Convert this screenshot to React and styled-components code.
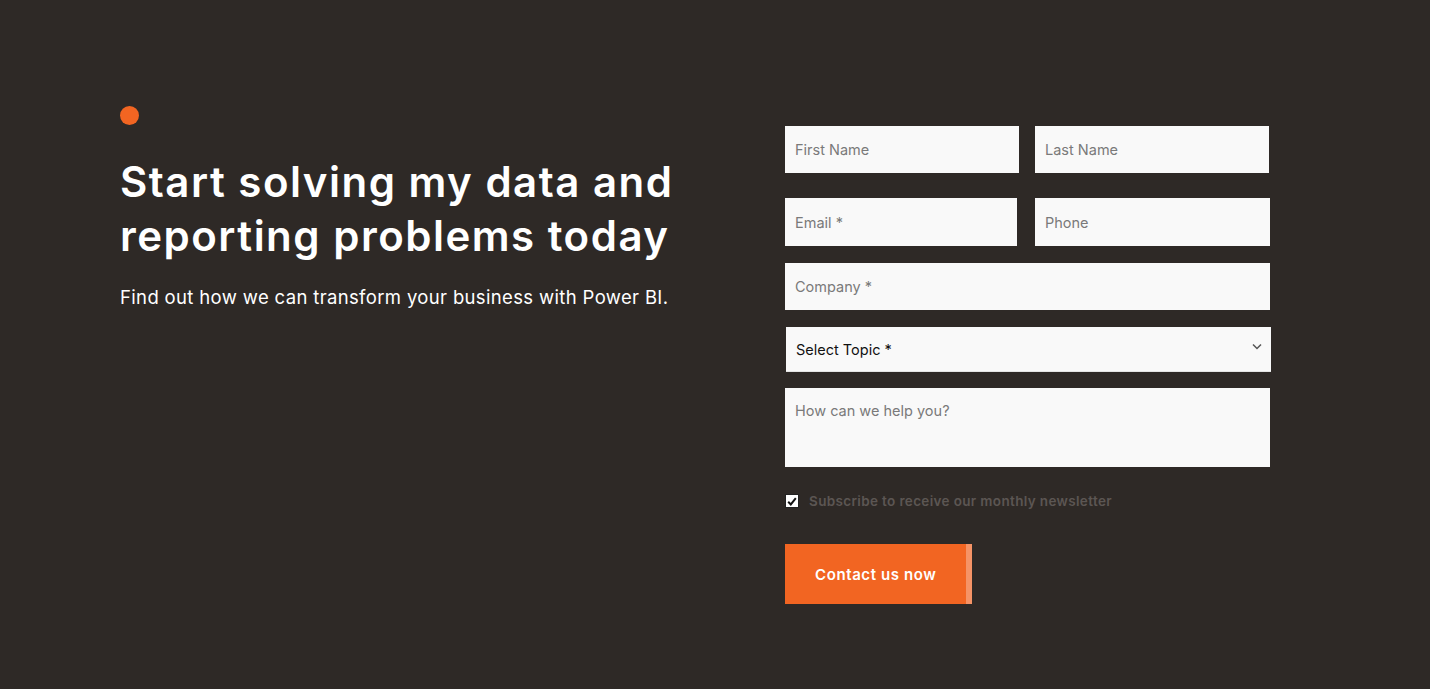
import React from "react";
import styled, { createGlobalStyle } from "styled-components";

const GlobalStyle = createGlobalStyle`
  html, body {
    margin: 0;
    padding: 0;
    background: #2e2926;
  }
  body {
    font-family: "Inter", "Noto Sans", sans-serif;
  }
  * {
    box-sizing: border-box;
  }
`;

const Page = styled.div`
  width: 1430px;
  height: 689px;
  background: #2e2926;
  display: grid;
  grid-template-columns: 665px 485px;
  align-items: start;
  padding: 106px 0 0 120px;
`;

const Intro = styled.div`
  display: flex;
  flex-direction: column;
`;

const Dot = styled.span`
  display: block;
  width: 19px;
  height: 19px;
  border-radius: 50%;
  background: #f26522;
`;

const Heading = styled.h1`
  margin: 30px 0 0;
  color: #fff;
  font-size: 42px;
  font-weight: 600;
  line-height: 54px;
  letter-spacing: 1.5px;
  white-space: nowrap;
`;

const Lead = styled.p`
  margin: 21px 0 0;
  color: #fff;
  font-size: 18.5px;
  font-weight: 400;
  line-height: 26px;
  letter-spacing: 0.35px;
`;

const Form = styled.form`
  display: flex;
  flex-direction: column;
  padding-top: 20px;
`;

const Row = styled.div`
  display: grid;
  grid-template-columns: ${(p) => p.$cols || "234px 234px"};
  column-gap: ${(p) => p.$colGap || 16}px;
  margin-bottom: ${(p) => p.$gap}px;
`;

const Field = styled.input`
  width: 100%;
  height: ${(p) => p.$h || 47}px;
  margin: 0 0 ${(p) => p.$gap || 0}px;
  border: none;
  background: #f9f9f9;
  padding: 0 10px;
  font-family: inherit;
  font-size: 14.5px;
  color: #333;
  outline: none;
  &::placeholder {
    color: #7a7a7a;
  }
`;

const SelectWrap = styled.div`
  position: relative;
  height: 45px;
  margin: 0 -1px 16px 1px;
  background: #f9f9f9;
  border-bottom: 1px solid #e4e4e4;
  display: flex;
  align-items: center;
  padding: 0 10px;
  font-size: 14.5px;
  color: #111;
`;

const Chevron = styled.svg`
  position: absolute;
  right: 9px;
  top: 16px;
`;

const Message = styled.textarea`
  width: 100%;
  height: 79px;
  border: none;
  background: #f9f9f9;
  padding: 14px 10px;
  font-family: inherit;
  font-size: 14.5px;
  resize: none;
  outline: none;
  &::placeholder {
    color: #7a7a7a;
  }
`;

const CheckRow = styled.label`
  display: flex;
  align-items: center;
  gap: 10px;
  margin-top: 26px;
  color: #5c5653;
  font-size: 13.5px;
  font-weight: 600;
  letter-spacing: 0.35px;
`;

const Box = styled.span`
  width: 14px;
  height: 14px;
  background: #fff;
  border: 1px solid #222;
  display: flex;
  align-items: center;
  justify-content: center;
`;

const Button = styled.button`
  align-self: flex-start;
  margin-top: 35px;
  width: 187px;
  height: 60px;
  border: none;
  background: #f26522;
  box-shadow: inset -6px 0 0 #f59366;
  color: #fff;
  font-family: inherit;
  font-size: 15px;
  font-weight: 600;
  letter-spacing: 0.6px;
  padding: 0 0 0 30px;
  text-align: left;
  cursor: pointer;
`;

export default function App() {
  return (
    <>
      <GlobalStyle />
      <Page>
        <Intro>
          <Dot />
          <Heading>
            Start solving my data and
            <br />
            reporting problems today
          </Heading>
          <Lead>Find out how we can transform your business with Power BI.</Lead>
        </Intro>
        <Form onSubmit={(e) => e.preventDefault()}>
          <Row $gap={25}>
            <Field placeholder="First Name" />
            <Field placeholder="Last Name" />
          </Row>
          <Row $gap={17} $cols="232px 235px" $colGap={18}>
            <Field $h={48} placeholder="Email *" />
            <Field $h={48} placeholder="Phone" />
          </Row>
          <Field $gap={17} placeholder="Company *" />
          <SelectWrap>
            Select Topic *
            <Chevron width="10" height="7" viewBox="0 0 10 7">
              <path d="M1 1.5 L5 5.5 L9 1.5" fill="none" stroke="#555" strokeWidth="1.5" />
            </Chevron>
          </SelectWrap>
          <Message placeholder="How can we help you?" />
          <CheckRow>
            <Box>
              <svg width="10" height="9" viewBox="0 0 10 9">
                <path d="M1.2 4.8 L3.8 7.4 L8.8 1.2" fill="none" stroke="#111" strokeWidth="2" />
              </svg>
            </Box>
            Subscribe to receive our monthly newsletter
          </CheckRow>
          <Button type="submit">Contact us now</Button>
        </Form>
      </Page>
    </>
  );
}
